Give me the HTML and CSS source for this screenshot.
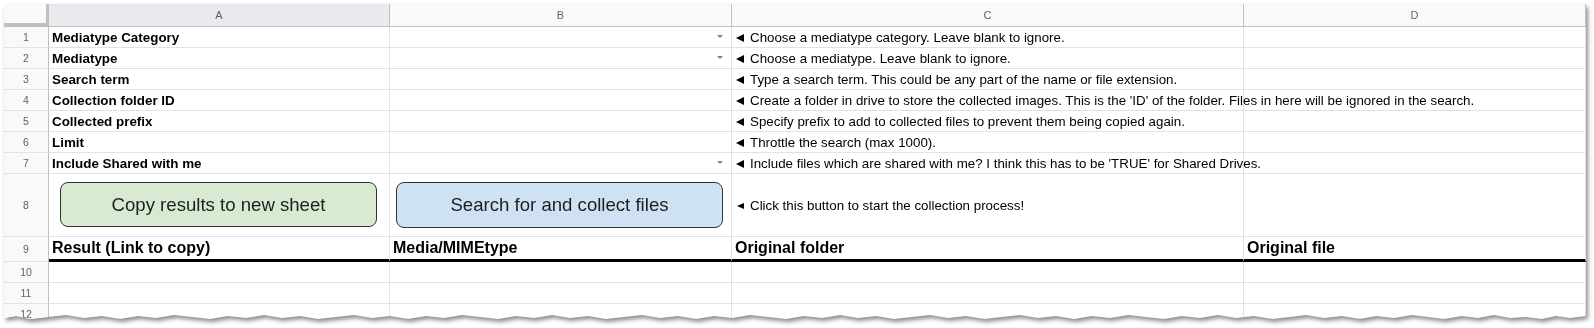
FILE: index.html
```html
<!DOCTYPE html>
<html lang="en">
<head>
    <meta charset="UTF-8">
    <title>Media collector - settings sheet</title>
    <link rel="stylesheet" href="styles.css">
</head>
<body>
    <div class="frame">
        <div class="sheet">
            <div class="row head">
                <div class="corner"></div>
                <div class="colhead selected">A</div>
                <div class="colhead">B</div>
                <div class="colhead">C</div>
                <div class="colhead">D</div>
            </div>
            <div class="row">
                <div class="rownum">1</div>
                <div class="cell label">Mediatype Category</div>
                <div class="cell drop"><span class="caret"></span></div>
                <div class="cell note"><span class="arrow"></span>Choose a mediatype category. Leave blank to ignore.</div>
                <div class="cell"></div>
            </div>
            <div class="row">
                <div class="rownum">2</div>
                <div class="cell label">Mediatype</div>
                <div class="cell drop"><span class="caret"></span></div>
                <div class="cell note"><span class="arrow"></span>Choose a mediatype. Leave blank to ignore.</div>
                <div class="cell"></div>
            </div>
            <div class="row">
                <div class="rownum">3</div>
                <div class="cell label">Search term</div>
                <div class="cell"></div>
                <div class="cell note"><span class="arrow"></span>Type a search term. This could be any part of the name or file extension.</div>
                <div class="cell"></div>
            </div>
            <div class="row">
                <div class="rownum">4</div>
                <div class="cell label">Collection folder ID</div>
                <div class="cell"></div>
                <div class="cell note overflow"><span class="arrow"></span>Create a folder in drive to store the collected images. This is the 'ID' of the folder. Files in here will be ignored in the search.</div>
                <div class="cell"></div>
            </div>
            <div class="row">
                <div class="rownum">5</div>
                <div class="cell label">Collected prefix</div>
                <div class="cell"></div>
                <div class="cell note"><span class="arrow"></span>Specify prefix to add to collected files to prevent them being copied again.</div>
                <div class="cell"></div>
            </div>
            <div class="row">
                <div class="rownum">6</div>
                <div class="cell label">Limit</div>
                <div class="cell"></div>
                <div class="cell note"><span class="arrow"></span>Throttle the search (max 1000).</div>
                <div class="cell"></div>
            </div>
            <div class="row">
                <div class="rownum">7</div>
                <div class="cell label">Include Shared with me</div>
                <div class="cell drop"><span class="caret"></span></div>
                <div class="cell note"><span class="arrow"></span>Include files which are shared with me? I think this has to be 'TRUE' for Shared Drives.</div>
                <div class="cell"></div>
            </div>
            <div class="row tall">
                <div class="rownum">8</div>
                <div class="cell btn-cell first"><button class="btn green">Copy results to new sheet</button></div>
                <div class="cell btn-cell second"><button class="btn blue">Search for and collect files</button></div>
                <div class="cell note small"><span class="arrow"></span>Click this button to start the collection process!</div>
                <div class="cell"></div>
            </div>
            <div class="row titles">
                <div class="rownum">9</div>
                <div class="cell title">Result (Link to copy)</div>
                <div class="cell title">Media/MIMEtype</div>
                <div class="cell title">Original folder</div>
                <div class="cell title">Original file</div>
            </div>
            <div class="row">
                <div class="rownum">10</div>
                <div class="cell"></div>
                <div class="cell"></div>
                <div class="cell"></div>
                <div class="cell"></div>
            </div>
            <div class="row">
                <div class="rownum">11</div>
                <div class="cell"></div>
                <div class="cell"></div>
                <div class="cell"></div>
                <div class="cell"></div>
            </div>
            <div class="row">
                <div class="rownum">12</div>
                <div class="cell"></div>
                <div class="cell"></div>
                <div class="cell"></div>
                <div class="cell"></div>
            </div>
        </div>
    </div>
</body>
</html>
```

FILE: styles.css
```css
body {
    margin: 0;
    background-color: #ffffff;
    font-family: 'Liberation Sans', Arial, sans-serif;
    color: #000000;
}
.frame {
    padding: 4px 0 0 4px;
    filter: drop-shadow(2px 3px 2px rgba(0,0,0,0.45));
}
.sheet {
    width: 1582px;
    height: 322px;
    overflow: hidden;
    background-color: #ffffff;
    box-shadow: inset 1px 1px 0 #e4e4e4;
    clip-path: polygon(0 0, 1582px 0, 1582px 312px, 1566px 314px, 1552px 312px, 1538px 315px, 1522px 313px, 1506px 314px, 1490px 311px, 1474px 314px, 1458px 312px, 1440px 315px, 1424px 313px, 1408px 311px, 1390px 314px, 1372px 312px, 1356px 315px, 1338px 312px, 1320px 314px, 1302px 311px, 1286px 313px, 1268px 315px, 1250px 312px, 1232px 314px, 1214px 311px, 1196px 314px, 1178px 312px, 1160px 315px, 1142px 313px, 1124px 311px, 1106px 314px, 1088px 312px, 1070px 315px, 1052px 312px, 1034px 314px, 1016px 311px, 998px 313px, 980px 315px, 962px 312px, 944px 314px, 926px 311px, 908px 313px, 890px 315px, 872px 312px, 854px 314px, 836px 311px, 818px 314px, 800px 312px, 782px 315px, 764px 313px, 746px 311px, 728px 314px, 710px 312px, 692px 315px, 674px 312px, 656px 314px, 638px 311px, 620px 313px, 602px 315px, 584px 312px, 566px 314px, 548px 311px, 530px 314px, 512px 312px, 494px 315px, 476px 313px, 458px 311px, 440px 314px, 422px 312px, 404px 315px, 386px 312px, 368px 314px, 350px 311px, 332px 313px, 314px 315px, 296px 312px, 278px 314px, 260px 311px, 242px 314px, 224px 312px, 206px 315px, 188px 313px, 170px 311px, 152px 314px, 134px 312px, 116px 315px, 98px 312px, 80px 314px, 62px 311px, 44px 313px, 26px 315px, 12px 312px, 0 314px);
}
.row {
    display: grid;
    grid-template-columns: 45px 341px 342px 512px 342px;
    height: 21px;
}
.row.head {
    height: 23px;
}
.row.tall {
    height: 63px;
}
.row.titles {
    height: 25px;
}
.corner {
    background-color: #f8f9fa;
    border-right: 3px solid #c0c0c0;
    border-bottom: 4px solid #c0c0c0;
}
.colhead {
    display: flex;
    align-items: center;
    justify-content: center;
    background-color: #f8f9fa;
    border-right: 1px solid #c0c0c0;
    border-bottom: 1px solid #c0c0c0;
    color: #5f6368;
    font-size: 11px;
}
.colhead.selected {
    background-color: #e8eaed;
}
.rownum {
    display: flex;
    align-items: center;
    justify-content: center;
    background-color: #f8f9fa;
    border-right: 1px solid #c0c0c0;
    border-bottom: 1px solid #e2e2e3;
    color: #5f6368;
    font-size: 10.5px;
}
.cell {
    display: flex;
    align-items: center;
    padding: 0 3px;
    border-right: 1px solid #e2e2e3;
    border-bottom: 1px solid #e2e2e3;
    font-size: 13.33px;
    white-space: nowrap;
    min-width: 0;
}
.cell.label {
    font-weight: bold;
    font-size: 13.4px;
    padding-top: 1px;
}
.cell.note {
    padding-left: 4px;
    padding-top: 1px;
}
.arrow {
    flex: none;
    width: 0;
    height: 0;
    border-top: 4.5px solid transparent;
    border-bottom: 4.5px solid transparent;
    border-right: 8px solid #000000;
    margin-right: 6px;
}
.cell.overflow {
    overflow: visible;
    position: relative;
    z-index: 1;
}
.cell.small .arrow {
    border-top-width: 3.5px;
    border-bottom-width: 3.5px;
    border-right-width: 7px;
    margin-left: 1px;
    margin-right: 6px;
}
.cell.drop {
    justify-content: flex-end;
    padding-right: 8px;
}
.caret {
    width: 0;
    height: 0;
    border-left: 3px solid transparent;
    border-right: 3px solid transparent;
    border-top: 3px solid #808080;
    margin-top: -1px;
}
.btn-cell.first {
    padding: 8px 12px 9px 11px;
}
.btn-cell.second {
    padding: 8px 8px 8px 6px;
}
.btn {
    width: 100%;
    height: 100%;
    border: 1px solid #333333;
    border-radius: 8px;
    font-family: 'Liberation Sans', Arial, sans-serif;
    font-size: 18.6px;
    color: #1e1e1e;
    padding: 0;
}
.btn.green {
    background-color: #d9ead3;
}
.btn.blue {
    background-color: #cfe2f3;
}
.row.titles .cell {
    border-bottom: 3px solid #000000;
    align-items: flex-end;
    padding-bottom: 2px;
}
.row.titles .rownum {
    border-bottom-color: #e2e2e3;
}
.cell.title {
    font-size: 16px;
    font-weight: bold;
}
```
